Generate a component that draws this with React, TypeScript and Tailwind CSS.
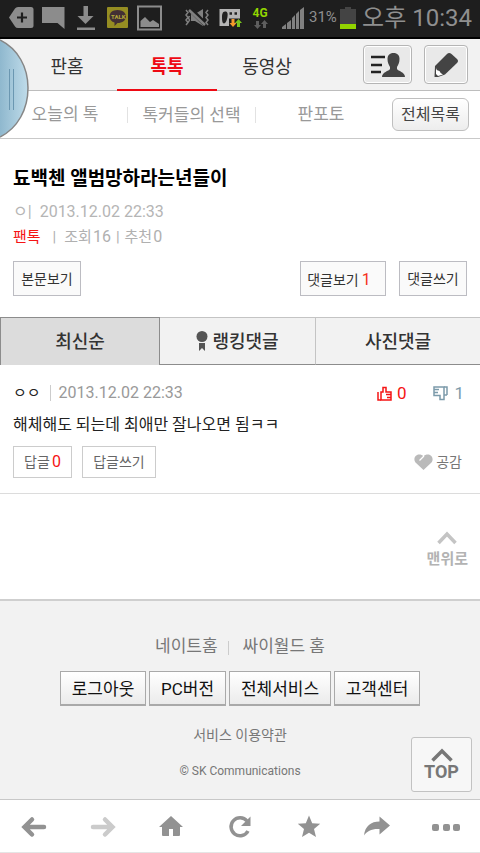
const dateText = '2013.12.02 22:33'

const StatusBar = () => (
  <div className="flex h-[39px] items-center bg-[#1e1e1e] border-b-2 border-black text-[#8f8f8f] px-2 pb-[2px]">
    <svg className="w-[164px] h-[34px] shrink-0" viewBox="8 0 164 34" fill="#8c8c8c">
      <path d="M9 16.500l6-9q1-1.500 3-1.500h13q2.500 0 2.500 2.500v16q0 2.500-2.500 2.500H18q-2 0-3-1.500z" />
      <path d="M17 16.500h10M22 11.500v10" stroke="#1e1e1e" strokeWidth="2.200" />
      <path d="M42 6h22.500v22l-7-6H42z" />
      <path d="M83.500 5h4.500v10h5.500l-8 8-8-8h6zM77 26.500h18v2.500H77z" />
      <rect x="107" y="6" width="21" height="21" rx="1" fill="#958d22" />
      <path d="M117.500 9c5 0 8.500 2.800 8.500 6.600s-3.500 6.500-8.500 6.500l-3 3v-3.500c-3-.8-5-3-5-6 0-3.800 3-6.600 8-6.600z" fill="#423034" />
      <text x="111" y="18" fontSize="6" fontWeight="700" fill="#b3a83a" fontFamily="Roboto, sans-serif">TALK</text>
      <rect x="138" y="5.500" width="23" height="23" fill="none" stroke="#8c8c8c" strokeWidth="2" />
      <path d="M140.500 26v-6l4.500-4 5 5 3-2 6 4v3z" />
    </svg>
    <svg className="ml-3 w-[122px] h-[34px] shrink-0" viewBox="184 0 122 34" fill="#808080">
      <path d="M191 13h4l8-5v17l-8-5h-4z" />
      <path d="M189 7l17 17" stroke="#1e1e1e" strokeWidth="5" />
      <path d="M189 9l16 15" stroke="#808080" strokeWidth="2.500" />
      <path d="M186 9l2 2.500-2 2.500 2 2.500-2 2.500 2 2.500-2 2.500M189.500 15l-1 2 1 2-1 2M208 9l-2 2.500 2 2.500-2 2.500 2 2.500-2 2.500 2 2.500" stroke="#808080" strokeWidth="1.500" fill="none" />
      <path d="M219.500 8H240v17h-20.500z" fill="#b5b5b5" />
      <path d="M225 10.500c2.500 0 3 2 2.500 5-.5 4-2 7-3.500 7s-2-3-2-6 .5-6 3-6z" fill="#222" />
      <path d="M229.500 12.500h2.500M234.500 12.500h2.500" stroke="#222" strokeWidth="2.500" />
      <path d="M229 17.500h12V26h-12z" fill="#1e1e1e" />
      <path d="M231.500 18v4h-2l3.500 4 3.500-4h-2v-4z" fill="#f59a2c" />
      <path d="M237 26v-4h-2l3.500-4 3.500 4h-2v4z" fill="#78c51d" />
      <text x="252.500" y="16" fontSize="12" fontWeight="700" fill="#92d400" fontFamily="Roboto, sans-serif">4G</text>
      <path d="M256 20v4h-2l3.500 4 3.500-4h-2v-4zM263 27v-4h-2l3.500-4 3.500 4h-2v4z" fill="#5e5e5e" />
      <path d="M282 28v-2l4-3v5zM287 28v-6l4-3v9zM292 28V17l3-3v14zM296 28V13l3-3v18zM300 28V9l4-3v22z" />
    </svg>
    <span className="ml-[3px] text-[15px] shrink-0">31%</span>
    <svg className="ml-[3px] w-4 h-[24px] shrink-0" viewBox="0 0 16 24">
      <path d="M5 1h6v2h5v20H0V3h5z" fill="#444" />
      <path d="M0 18h16v5H0z" fill="#92d400" />
    </svg>
    <span className="ml-auto whitespace-nowrap text-[24px] leading-8">오후 10:34</span>
  </div>
)

const Header = () => (
  <header>
    <div className="flex h-[52px] items-center bg-[#f2f2f2] border-b border-[#bdbdbd] pr-3">
      <nav className="flex h-[52px] grow pl-[17px] text-[18px] text-[#333]">
        <a href="#" className="flex w-[100px] items-center justify-center pt-[3px]">판홈</a>
        <a href="#" className="flex w-[100px] items-center justify-center border-b-2 border-[#ee0a14] pt-[5px] font-bold text-[#ee0a14]">톡톡</a>
        <a href="#" className="flex w-[100px] items-center justify-center pt-[3px]">동영상</a>
      </nav>
      <div className="flex gap-3">
        <button aria-label="내 판" className="flex h-[39px] w-[49px] items-center justify-center rounded border border-[#b5b5b5] bg-[#e9e9e9] ring-1 ring-inset ring-white">
          <svg className="w-9 h-7" viewBox="0 0 36 28" fill="#444">
            <path d="M1 6h14M1 14h11M1 21h10" stroke="#222" strokeWidth="2.500" />
            <path d="M23.500 2c4 0 6 2.500 6 6 0 4-1.500 6-2.500 8v2c1 2 8 3 8 8H12c0-5 7-6 8-8v-2c-1-2-2.500-4-2.500-8 0-3.500 2-6 6-6z" />
          </svg>
        </button>
        <button aria-label="글쓰기" className="flex h-[39px] w-11 items-center justify-center rounded border border-[#b5b5b5] bg-[#e9e9e9] ring-1 ring-inset ring-white">
          <svg className="w-7 h-7" viewBox="0 0 28 28">
            <path d="M3 15L15 3q2-2 4.500 0l5.500 5q2 2 0 4L13 23.500 6 26H2.500z" fill="#444" />
            <path d="M4 16.500q0 3 3.500 3.500 1 3 3.500 3.500l-5 1.500-2-2z" fill="#fff" />
          </svg>
        </button>
      </div>
    </div>
    <div className="flex h-12 items-center border-b border-[#c9c9c9] pl-[3px] pr-[11px] text-[17px] text-[#999]">
      <a href="#" className="w-[124px] pt-px text-center">오늘의 톡</a>
      <a href="#" className="w-[129px] border-x border-[#e2e2e2] text-center leading-4">톡커들의 선택</a>
      <a href="#" className="w-[130px] pt-px text-center">판포토</a>
      <button className="ml-auto h-[33px] w-[77px] rounded-md border border-[#bfbfbf] bg-linear-to-b from-white to-[#ededed] text-[16px] text-[#444]">전체목록</button>
    </div>
    {/* edge panel handle, floats over the header */}
    <svg className="absolute left-0 top-[39px] w-[29px] h-[100px]" viewBox="0 0 29 100">
      <defs>
        <linearGradient id="handle" x1="0" x2="1">
          <stop offset="0" stopColor="#8fb8ce" />
          <stop offset="1" stopColor="#c0dcea" />
        </linearGradient>
      </defs>
      <path d="M0 1C18 10 28 28 28 49S18 89 0 98z" fill="url(#handle)" />
      <path d="M0 1C18 10 28 28 28 49S18 89 0 98" fill="none" stroke="#868686" strokeWidth="1.500" />
      <path d="M9.500 30v41M13.500 30v41" stroke="#6b97b1" />
    </svg>
  </header>
)

const boxButton = 'h-[35px] border border-[#bcbcc2] bg-[#fafafa] pt-[2px] text-[14px] text-[#333]'

const Post = () => (
  <section className="px-[13px] pt-[26px]">
    <h1 className="text-[19px] leading-7 font-bold text-black">됴백첸 앨범망하라는년들이</h1>
    <p className="mt-[7px] flex text-[16px] leading-6 text-[#b5b5b5]">
      <span>ㅇ|</span>
      <span className="ml-2">{dateText}</span>
    </p>
    <p className="mt-px flex text-[15px] leading-6 text-[#b0b0b0]">
      <a href="#" className="text-[#f51414]">팬톡</a>
      <span className="ml-3">|</span>
      <span className="ml-2">조회<span className="ml-px text-[16px]">16</span></span>
      <span className="ml-[5px]">|</span>
      <span className="ml-[5px]">추천<span className="ml-px text-[16px]">0</span></span>
    </p>
    <div className="mt-3 flex">
      <button className={`${boxButton} w-[68px]`}>본문보기</button>
      <button className={`${boxButton} ml-auto w-[86px] pr-2`}>댓글보기<span className="ml-[3px] text-[16px] text-[#f5301e]">1</span></button>
      <button className={`${boxButton} ml-[13px] w-[68px]`}>댓글쓰기</button>
    </div>
  </section>
)

const Tabs = () => (
  <div className="mt-[21px] grid grid-cols-[160fr_156fr_164fr] h-12 text-[18px] font-medium text-[#333]">
    <button className="border border-b-0 border-[#8c8c8c] bg-[#dcdcdc]">최신순</button>
    <button className="flex items-center justify-center gap-1 border-y border-r border-t-[#c4c4c4] border-r-[#c4c4c4] border-b-[#8c8c8c] bg-[#f2f2f2]">
      <svg className="w-3 h-5" viewBox="0 0 12 20" fill="#555">
        <circle cx="6" cy="5.500" r="5.500" />
        <path d="M3 12h6v8l-3-3-3 3z" />
      </svg>
      랭킹댓글
    </button>
    <button className="border-y border-t-[#c4c4c4] border-b-[#8c8c8c] bg-[#f2f2f2]">사진댓글</button>
  </div>
)

const Comment = () => (
  <article className="border-b border-[#dcdcdc] px-[13px] pt-4 pb-[15px]">
    <div className="flex items-center text-[17px] leading-6">
      <span className="text-[15px] text-[#222]">ㅇㅇ</span>
      <span className="ml-[9px] h-4 border-l border-[#ccc]" />
      <span className="ml-2 text-[16px] text-[#999]">{dateText}</span>
      <button className="ml-auto flex items-center gap-[5px] text-[#f51414]">
        <svg className="w-[15px] h-[15px]" viewBox="0 0 15 15" fill="none" stroke="currentColor" strokeWidth="1.500">
          <path d="M4 6h2V1.500h3V6h5v8H4z" />
          <path d="M1 6v8h3M9 8.500h5M10 11.500h4" />
        </svg>
        0
      </button>
      <button className="ml-[27px] mr-[3px] flex items-center gap-[6px] text-[#7c9bab]">
        <svg className="w-[15px] h-[15px]" viewBox="0 0 15 15" fill="none" stroke="currentColor" strokeWidth="1.500">
          <path d="M11 9.500v4H7v-4H1V1h10v8.500z" />
          <path d="M14 9V1h-3M1 3.500h5M1 6.500h4M11 9h3" />
        </svg>
        1
      </button>
    </div>
    <p className="mt-2 text-[16px] leading-6 text-[#222]">해체해도 되는데 최애만 잘나오면 됨ㅋㅋ</p>
    <div className="mt-[9px] flex items-center">
      <button className="h-8 w-[59px] border border-[#ccc] text-[14px] text-[#666]">답글<span className="ml-[2px] text-[16px] text-[#f51414]">0</span></button>
      <button className="ml-[10px] h-8 w-[74px] border border-[#ccc] text-[14px] text-[#666]">답글쓰기</button>
      <button className="ml-auto mr-[5px] flex items-center gap-[3px] text-[14px] text-[#777]">
        <svg className="w-[19px] h-4" viewBox="0 0 19 16" fill="#bababa">
          <path d="M9.500 16L1.500 8.500C-1 5.500 1 .5 5 .5c2 0 3.500.5 4.500 2 1-1.500 2.500-2 4.500-2 4 0 6 5 3.500 8z" />
          <path d="M5.500 6.500l4.500-4.500" stroke="#fff" strokeWidth="1.300" />
        </svg>
        공감
      </button>
    </div>
  </article>
)

const footerLinks = [
  { label: '로그아웃', width: 'w-[86px]' },
  { label: 'PC버전', width: 'w-[77px]' },
  { label: '전체서비스', width: 'w-[102px]' },
  { label: '고객센터', width: 'w-[86px]' },
]

const Footer = () => (
  <footer className="relative h-[200px] border-t-2 border-[#cfcfcf] bg-[#f2f2f2] pt-[33px] text-center text-[#777]">
    <div className="flex items-center justify-center text-[17px] leading-6">
      <a href="#">네이트홈</a>
      <span className="mx-[10px] mt-1 h-[14px] w-px bg-[#ccc]" />
      <a href="#" className="ml-1">싸이월드 홈</a>
    </div>
    <div className="mt-[13px] flex justify-center gap-[3px]">
      {footerLinks.map((link) => (
        <button key={link.label} className={`${link.width} h-[35px] border border-[#a9a9a9] border-b-2 bg-linear-to-b from-white to-[#ebebeb] pt-[3px] text-[17px] text-[#111]`}>{link.label}</button>
      ))}
    </div>
    <a href="#" className="mt-[17px] block text-[14px] leading-6">서비스 이용약관</a>
    <p className="mt-3 text-[12px] leading-6">© SK Communications</p>
    <button className="absolute right-2 bottom-[7px] flex h-[55px] w-[61px] flex-col items-center justify-center rounded-[3px] border border-[#c2c2c2] bg-[#f7f7f7] text-[18px] leading-5 font-bold text-[#777]">
      <svg className="w-[22px] h-[14px]" viewBox="0 0 22 14" fill="none" stroke="currentColor" strokeWidth="3.500">
        <path d="M1.500 12.500L11 3l9.500 9.500" />
      </svg>
      TOP
    </button>
  </footer>
)

const Toolbar = () => (
  <nav className="flex h-[54px] items-center justify-between border-y border-[#c8c8c8] border-b-[#e5e5e5] bg-white px-5 pt-px text-[#929292]">
    <button aria-label="뒤로"><svg className="w-7 h-7" viewBox="0 0 28 28" fill="none" stroke="currentColor" strokeWidth="4.500" strokeLinecap="round"><path d="M12 6.500L4.500 14l7.500 7.500M5 14h19" /></svg></button>
    <button aria-label="앞으로" className="text-[#cbcbcb]"><svg className="w-7 h-7" viewBox="0 0 28 28" fill="none" stroke="currentColor" strokeWidth="4.500" strokeLinecap="round"><path d="M16 6.500l7.500 7.500-7.500 7.500M23 14H4" /></svg></button>
    <button aria-label="홈"><svg className="w-7 h-7" viewBox="0 0 28 28" fill="currentColor"><path d="M14 3l12 11h-3v8q0 1-1 1h-6v-7h-4v7H6q-1 0-1-1v-8H2z" /></svg></button>
    <button aria-label="새로고침"><svg className="w-7 h-7" viewBox="0 0 28 28" fill="none" stroke="currentColor" strokeWidth="3.500"><path d="M21 8A9 9 0 1 0 22 18" /><path d="M24.500 3.500v9.500H15z" fill="currentColor" stroke="none" /></svg></button>
    <button aria-label="즐겨찾기"><svg className="w-7 h-7" viewBox="0 0 28 28" fill="currentColor"><path d="M14 2.500l3.200 7.700 8 .6-6.200 5.200 2 8-7-4.300L7 24l2-8-6.200-5.200 8-.6z" /></svg></button>
    <button aria-label="공유"><svg className="w-7 h-7" viewBox="0 0 28 28" fill="currentColor"><path d="M16.500 3.500L27 12.500l-10.500 9v-5.500C9 15.500 4 18 1 22.500 2 13 8 8.500 16.500 8.500z" /></svg></button>
    <button aria-label="더보기"><svg className="w-7 h-7" viewBox="0 0 28 28" fill="currentColor"><rect y="11" width="7" height="7" rx="2" /><rect x="11" y="11" width="7" height="7" rx="2" /><rect x="21" y="11" width="7" height="7" rx="2" /></svg></button>
  </nav>
)

const App = () => {
  return (
    <div className="relative bg-white font-['Roboto','Noto_Sans_CJK_KR',sans-serif]">
      <StatusBar />
      <Header />
      <main>
        <Post />
        <Tabs />
        <Comment />
        <div className="flex h-[105px] items-center justify-end pt-2 pr-3">
          <a href="#" className="flex flex-col items-center gap-[2px] text-[15px] leading-6 font-bold text-[#b3b3b3]">
            <svg className="w-5 h-[14px]" viewBox="0 0 20 14" fill="none" stroke="#c4c4c4" strokeWidth="3.500">
              <path d="M1.500 12L10 3l8.500 9" />
            </svg>
            맨위로
          </a>
        </div>
      </main>
      <Footer />
      <Toolbar />
    </div>
  )
}

export default App
